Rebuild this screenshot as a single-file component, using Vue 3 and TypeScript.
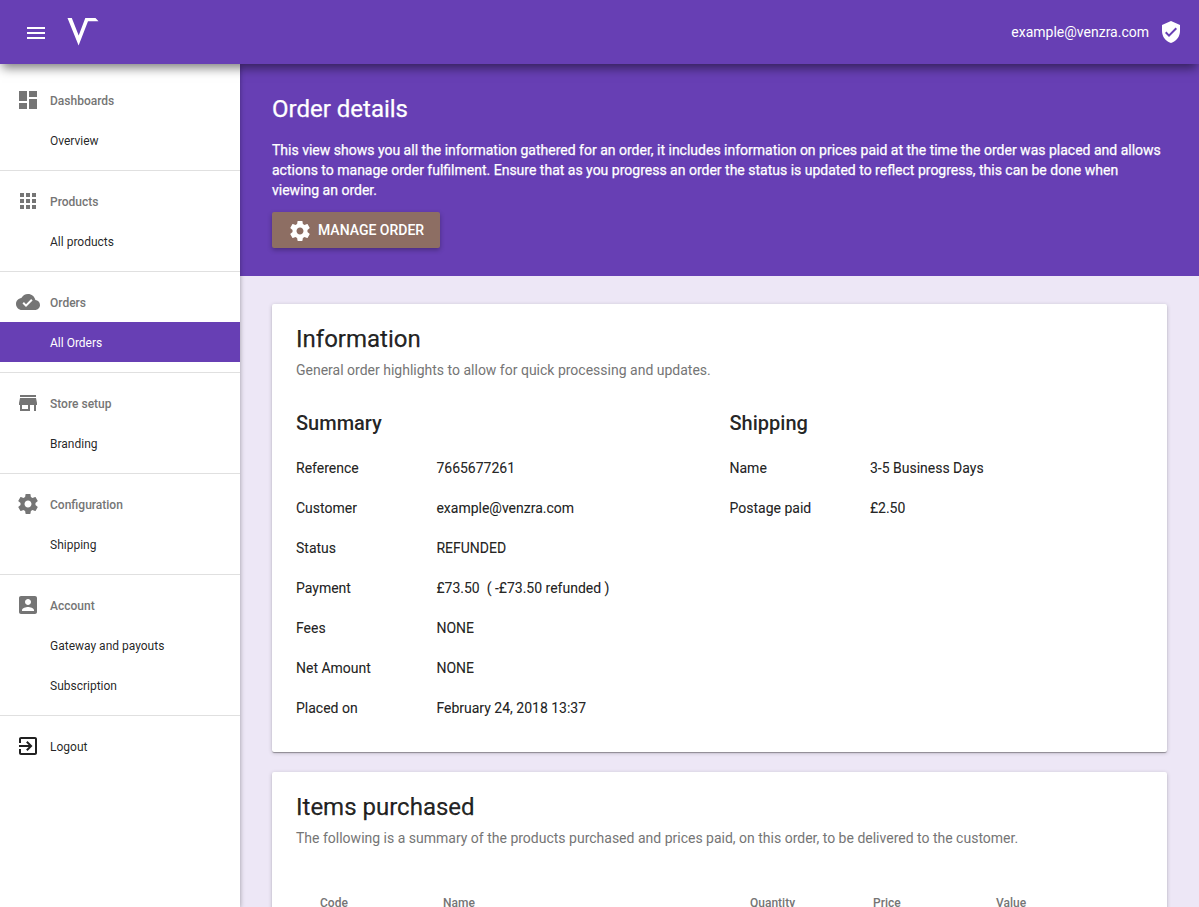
<script setup lang="ts">
interface NavGroup {
  label: string
  icon: string
  items: { label: string; active?: boolean }[]
}

const gear =
  'M19.43 12.98c.04-.32.07-.64.07-.98s-.03-.66-.07-.98l2.11-1.65c.19-.15.24-.42.12-.64l-2-3.46c-.12-.22-.39-.3-.61-.22l-2.49 1c-.52-.4-1.08-.73-1.69-.98l-.38-2.65C14.46 2.18 14.25 2 14 2h-4c-.25 0-.46.18-.49.42l-.38 2.65c-.61.25-1.17.59-1.69.98l-2.49-1c-.23-.09-.49 0-.61.22l-2 3.46c-.13.22-.07.49.12.64l2.11 1.65c-.04.32-.07.65-.07.98s.03.66.07.98l-2.11 1.65c-.19.15-.24.42-.12.64l2 3.46c.12.22.39.3.61.22l2.49-1c.52.4 1.08.73 1.69.98l.38 2.65c.03.24.24.42.49.42h4c.25 0 .46-.18.49-.42l.38-2.65c.61-.25 1.17-.59 1.69-.98l2.49 1c.23.09.49 0 .61-.22l2-3.46c.12-.22.07-.49-.12-.64l-2.11-1.65zM12 15.5c-1.93 0-3.5-1.57-3.5-3.5s1.57-3.5 3.5-3.5 3.5 1.57 3.5 3.5-1.57 3.5-3.5 3.5z'

const groups: NavGroup[] = [
  { label: 'Dashboards', icon: 'M3 13h8V3H3v10zm0 8h8v-6H3v6zm10 0h8V11h-8v10zm0-18v6h8V3h-8z', items: [{ label: 'Overview' }] },
  { label: 'Products', icon: 'M4 8h4V4H4v4zm6 12h4v-4h-4v4zm-6 0h4v-4H4v4zm0-6h4v-4H4v4zm6 0h4v-4h-4v4zm6-10v4h4V4h-4zm-6 4h4V4h-4v4zm6 6h4v-4h-4v4zm0 6h4v-4h-4v4z', items: [{ label: 'All products' }] },
  { label: 'Orders', icon: 'M19.35 10.04C18.67 6.59 15.64 4 12 4 9.11 4 6.6 5.64 5.35 8.04 2.34 8.36 0 10.91 0 14c0 3.31 2.69 6 6 6h13c2.76 0 5-2.24 5-5 0-2.64-2.05-4.78-4.65-4.96zM10 17l-3.5-3.5 1.41-1.41L10 14.17 15.18 9l1.41 1.41L10 17z', items: [{ label: 'All Orders', active: true }] },
  { label: 'Store setup', icon: 'M20 4H4v2h16V4zm1 10v-2l-1-5H4l-1 5v2h1v6h10v-6h4v6h2v-6h1zm-9 4H6v-4h6v4z', items: [{ label: 'Branding' }] },
  { label: 'Configuration', icon: gear, items: [{ label: 'Shipping' }] },
  { label: 'Account', icon: 'M3 5v14c0 1.1.89 2 2 2h14c1.1 0 2-.9 2-2V5c0-1.1-.9-2-2-2H5c-1.11 0-2 .9-2 2zm12 4c0 1.66-1.34 3-3 3s-3-1.34-3-3 1.34-3 3-3 3 1.34 3 3zm-9 8c0-2 4-3.1 6-3.1s6 1.1 6 3.1v1H6v-1z', items: [{ label: 'Gateway and payouts' }, { label: 'Subscription' }] },
]

const summary = [
  ['Reference', '7665677261'],
  ['Customer', 'example@venzra.com'],
  ['Status', 'REFUNDED'],
  ['Payment', '£73.50\u00a0 ( -£73.50 refunded )'],
  ['Fees', 'NONE'],
  ['Net Amount', 'NONE'],
  ['Placed on', 'February 24, 2018 13:37'],
]
const shipping = [
  ['Name', '3-5 Business Days'],
  ['Postage paid', '£2.50'],
]
const columns = ['Code', 'Name', 'Quantity', 'Price', 'Value']
</script>

<template>
  <div class="app">
    <header class="toolbar">
      <svg class="icon menu" viewBox="0 0 24 24"><path d="M3 18h18v-2H3v2zm0-5h18v-2H3v2zm0-7v2h18V6H3z" /></svg>
      <svg class="logo" viewBox="0 0 32 30"><path d="M0.5 1H4.8L11.7 18.5 18.3 1H28.5L31.5 4.3H21L11.6 28.5Z" /></svg>
      <span class="email">example@venzra.com</span>
      <svg class="icon" viewBox="0 0 24 24"><path d="M12 1L3 5v6c0 5.55 3.84 10.74 9 12 5.16-1.26 9-6.45 9-12V5l-9-4zm-2 16l-4-4 1.41-1.41L10 14.17l6.59-6.59L18 9l-8 8z" /></svg>
    </header>
    <div class="body">
      <nav class="sidebar">
        <section v-for="g in groups" :key="g.label" class="group">
          <div class="row heading">
            <svg class="icon" viewBox="0 0 24 24"><path :d="g.icon" /></svg>
            <span>{{ g.label }}</span>
          </div>
          <a v-for="i in g.items" :key="i.label" class="row item" :class="{ active: i.active }"><span>{{ i.label }}</span></a>
        </section>
        <section class="group">
          <a class="row logout">
            <svg class="icon" viewBox="0 0 24 24"><path d="M10.09 15.59L11.5 17l5-5-5-5-1.41 1.41L12.67 11H3v2h9.67l-2.58 2.59zM19 3H5c-1.11 0-2 .9-2 2v4h2V5h14v14H5v-4H3v4c0 1.1.89 2 2 2h14c1.1 0 2-.9 2-2V5c0-1.1-.9-2-2-2z" /></svg>
            <span>Logout</span>
          </a>
        </section>
      </nav>
      <main class="main">
        <section class="hero">
          <h1>Order details</h1>
          <p>This view shows you all the information gathered for an order, it includes information on prices paid at the time the order was placed and allows actions to manage order fulfilment. Ensure that as you progress an order the status is updated to reflect progress, this can be done when viewing an order.</p>
          <button class="manage">
            <svg class="icon" viewBox="0 0 24 24"><path :d="gear" /></svg>
            <span>MANAGE ORDER</span>
          </button>
        </section>
        <section class="card info">
          <h2>Information</h2>
          <p class="sub">General order highlights to allow for quick processing and updates.</p>
          <div class="cols">
            <div>
              <h3>Summary</h3>
              <div v-for="r in summary" :key="r[0]" class="pair"><span>{{ r[0] }}</span><span>{{ r[1] }}</span></div>
            </div>
            <div>
              <h3>Shipping</h3>
              <div v-for="r in shipping" :key="r[0]" class="pair"><span>{{ r[0] }}</span><span>{{ r[1] }}</span></div>
            </div>
          </div>
        </section>
        <section class="card">
          <h2>Items purchased</h2>
          <p class="sub">The following is a summary of the products purchased and prices paid, on this order, to be delivered to the customer.</p>
          <div class="thead"><span v-for="c in columns" :key="c">{{ c }}</span></div>
        </section>
      </main>
    </div>
  </div>
</template>

<style>
body {
  margin: 0;
  overflow: hidden;
}
</style>

<style scoped>
* {
  box-sizing: border-box;
}
h1, h2, h3, p {
  margin: 0;
}
.app {
  display: flex;
  flex-direction: column;
  height: 907px;
  overflow: hidden;
  background: #ede7f6;
  color: rgba(0, 0, 0, 0.87);
  font: 400 14px/20px Roboto, sans-serif;
}
.icon {
  width: 24px;
  height: 24px;
  flex: none;
  fill: currentColor;
}
.toolbar {
  position: relative;
  z-index: 3;
  display: flex;
  align-items: center;
  flex: none;
  height: 64px;
  padding: 0 16px 0 24px;
  background: #673fb4;
  color: #fff;
  box-shadow: 0 6px 10px -2px rgba(0, 0, 0, 0.5);
}
.menu {
  margin-top: 2px;
}
.logo {
  width: 32px;
  height: 30px;
  margin-left: 19px;
  fill: #fff;
}
.email {
  margin: 0 10px 0 auto;
}
.body {
  display: flex;
  flex: 1;
  min-height: 0;
}
.sidebar {
  position: relative;
  z-index: 2;
  width: 240px;
  flex: none;
  padding-top: 6px;
  background: #fff;
  font-size: 12px;
  box-shadow: 0 1px 5px rgba(0, 0, 0, 0.35);
}
.group {
  padding: 10px 0;
}
.group + .group {
  border-top: 1px solid #e0e0e0;
}
.row {
  display: flex;
  align-items: center;
  gap: 10px;
  height: 40px;
  padding-left: 16px;
}
.row span {
  padding-top: 2px;
}
.heading {
  color: #757575;
  font-weight: 500;
}
.item {
  padding-left: 50px;
}
.active {
  background: #673fb4;
  color: #fff;
}
.main {
  flex: 1;
  min-width: 0;
}
.hero {
  height: 212px;
  padding: 29px 32px 0;
  background: #673fb4;
  color: #fff;
}
h1, h2 {
  font-size: 24px;
  font-weight: 400;
  line-height: 32px;
  -webkit-text-stroke: 0.25px currentColor;
}
.hero p {
  margin-top: 15px;
  -webkit-text-stroke: 0.25px currentColor;
}
.manage {
  display: flex;
  align-items: center;
  gap: 6px;
  height: 36px;
  margin-top: 12px;
  padding: 0 16px;
  border: 0;
  border-radius: 2px;
  background: #8d6e63;
  color: #fff;
  font: 500 14px/36px Roboto, sans-serif;
  box-shadow: 0 2px 5px rgba(0, 0, 0, 0.3);
}
.manage .icon {
  margin-top: 2px;
}
.card {
  height: 448px;
  margin: 20px 32px 0;
  padding: 19px 24px;
  border-radius: 2px;
  background: #fff;
  box-shadow: 0 1px 4px rgba(0, 0, 0, 0.2), 0 1px 1px rgba(0, 0, 0, 0.2), 0 2px 1px -1px rgba(0, 0, 0, 0.15);
}
.info {
  margin-top: 28px;
}
.sub {
  margin-top: 5px;
  color: #757575;
}
.cols {
  display: grid;
  grid-template-columns: 1fr 1fr;
  gap: 20px;
  margin-top: 31px;
}
h3 {
  font-size: 20px;
  font-weight: 500;
  line-height: 24px;
  margin-bottom: 13px;
}
.pair {
  display: grid;
  grid-template-columns: 140.4px 1fr;
  line-height: 40px;
  -webkit-text-stroke: 0.15px currentColor;
}
.thead {
  display: grid;
  grid-template-columns: 123px 307px 123px 123px 123px;
  margin: 45px 0 0 24px;
  color: #757575;
  font-size: 12px;
  font-weight: 500;
}
</style>
